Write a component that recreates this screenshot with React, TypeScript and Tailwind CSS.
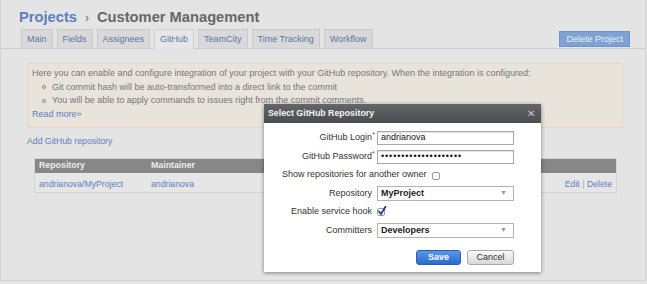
import React from "react";

const tabs = ["Main", "Fields", "Assignees", "GitHub", "TeamCity", "Time Tracking", "Workflow"];

function Check({ checked }: { checked?: boolean }) {
  return (
    <svg width="10" height="10" viewBox="0 0 10 10" className="shrink-0">
      <rect x="0.5" y="2.5" width="7" height="7" rx="1.5" fill="#fff" stroke="#9a9a9a" />
      {checked && <path d="M2 5.5 L4 8 L8.5 0.8" fill="none" stroke="#1f3f8a" strokeWidth="1.8" strokeLinecap="round" />}
    </svg>
  );
}

function Label({ text, req }: { text: string; req?: boolean }) {
  return (
    <div className="w-[108px] shrink-0 text-right text-[9px] text-[#333]">
      <span className="relative">
        {text}
        {req && <span className="absolute -right-[3px] -top-[2px] text-[7px] text-[#d22]">*</span>}
      </span>
    </div>
  );
}

function Select({ value }: { value: string }) {
  return (
    <div className="ml-[5px] flex h-[15px] w-[137px] items-center justify-between border border-[#b3b3b3] bg-white pl-[3px] pr-[6px]">
      <span className="text-[9px] font-bold text-[#222]">{value}</span>
      <span className="text-[7px] text-[#999]">▼</span>
    </div>
  );
}

export default function App() {
  return (
    <div className="relative h-[284px] w-[647px] overflow-hidden bg-[#e4e4e4] font-['Liberation_Sans',Arial,sans-serif]">
      {/* page behind the dialog */}
      <div className="h-[281px] w-[646px] border-r border-b border-l border-[#d2d2d2]">
        <h1 className="pl-[18px] pt-[8px] text-[14.7px] font-bold leading-[18px]">
          <span className="text-[#5b80c0]">Projects</span>
          <span className="mx-[8px] text-[12px] text-[#8a8a8a]">›</span>
          <span className="text-[#676767]">Customer Management</span>
        </h1>

        <div className="mt-[2px] flex items-end justify-between border-b border-[#cdcdcd] pl-[20px] pr-[15px]">
          <div className="flex gap-[4px]">
            {tabs.map((t) => (
              <div
                key={t}
                className={
                  t === "GitHub"
                    ? "-mb-px h-[20px] border border-b-0 border-[#cfcfcf] bg-[#e6e6e6] px-[5px] text-[9px] leading-[19px] text-[#5a76a8]"
                    : "h-[19px] border border-b-0 border-[#cacaca] bg-[#d9d9d9] px-[5px] text-[9px] leading-[19px] text-[#5a76a8]"
                }
              >
                {t}
              </div>
            ))}
          </div>
          <div className="mb-[1px] h-[16px] border border-[#6f94c6] bg-[#7ea2d3] px-[6px] text-[9px] leading-[14px] text-[#e9eff8]">
            Delete Project
          </div>
        </div>

        <div className="ml-[26px] mt-[14px] w-[596px]">
          <div className="border border-[#e2d8bc] bg-[#e8e4db] px-[4px] pb-[6px] pt-[3px] text-[9px] leading-[13.5px] text-[#767676]">
            <p>Here you can enable and configure integration of your project with your GitHub repository. When the integration is configured:</p>
            <div className="flex items-center pl-[10px]">
              <span className="mr-[6px] h-[4px] w-[4px] rounded-full border border-[#8a8a8a]" />
              Git commit hash will be auto-transformed into a direct link to the commit
            </div>
            <div className="flex items-center pl-[10px]">
              <span className="mr-[6px] h-[4px] w-[4px] rounded-full border border-[#8a8a8a]" />
              You will be able to apply commands to issues right from the commit comments.
            </div>
            <a className="text-[#5b80c0]">Read more»</a>
          </div>

          <div className="mt-[7px] text-[8.7px] leading-[13px] text-[#5b80c0]">Add GitHub repository</div>

          <div className="ml-[7px] mt-[10px] w-[583px] border border-[#d3d3d3]">
            <div className="flex h-[14px] items-center bg-[#878787] text-[8.8px] font-bold text-[#ededed]">
              <span className="w-[116px] pl-[4px]">Repository</span>
              <span>Maintainer</span>
            </div>
            <div className="flex h-[19px] items-center bg-[#e6e6e6] pt-[4px] text-[8.7px] text-[#5b80c0]">
              <span className="w-[116px] pl-[4px]">andrianova/MyProject</span>
              <span>andrianova</span>
              <span className="ml-auto pr-[4px]">
                Edit <span className="text-[#aaa]">|</span> Delete
              </span>
            </div>
          </div>
        </div>
      </div>

      {/* dialog */}
      <div className="absolute left-[264px] top-[104px] flex w-[277px] flex-col bg-white shadow-[0_1px_4px_rgba(0,0,0,0.45)]">
        <div className="flex h-[19px] items-center justify-between bg-gradient-to-b from-[#64666a] to-[#4a4c50] pl-[4px] pr-[6px]">
          <span className="text-[8.8px] font-bold text-[#f2f2f2]">Select GitHub Repository</span>
          <span className="text-[10px] text-[#c9c9c9]">✕</span>
        </div>

        <div className="flex flex-col pb-[7px]">
          <div className="mt-[8px] flex h-[14px] items-center">
            <Label text="GitHub Login" req />
            <div className="ml-[5px] flex h-[14px] w-[137px] items-center border border-[#a8a8a8] bg-white pl-[3px] text-[9px] text-[#111] shadow-[inset_0_1px_1px_rgba(0,0,0,0.12)]">
              andrianova
            </div>
          </div>
          <div className="mt-[5px] flex h-[14px] items-center">
            <Label text="GitHub Password" req />
            <div className="ml-[5px] flex h-[14px] w-[137px] items-center border border-[#a8a8a8] bg-white pl-[3px] text-[9px] tracking-[0.9px] text-[#111] shadow-[inset_0_1px_1px_rgba(0,0,0,0.12)]">
              ••••••••••••••••••••
            </div>
          </div>
          <div className="mt-[4px] flex h-[14px] items-center gap-[5px] pl-[18px] text-[9px] text-[#333]">
            Show repositories for another owner
            <Check />
          </div>
          <div className="mt-[4px] flex h-[15px] items-center">
            <Label text="Repository" />
            <Select value="MyProject" />
          </div>
          <div className="mt-[4px] flex h-[14px] items-center">
            <Label text="Enable service hook" />
            <div className="ml-[5px] -mt-[2px]">
              <Check checked />
            </div>
          </div>
          <div className="mt-[4px] flex h-[15px] items-center">
            <Label text="Committers" />
            <Select value="Developers" />
          </div>
          <div className="mt-[12px] flex justify-end gap-[6px] pr-[27px]">
            <button className="h-[15px] w-[45px] rounded-[3px] border border-[#2b5fae] bg-gradient-to-b from-[#5a98e6] to-[#2a6acd] text-[9px] font-bold leading-[13px] text-white">
              Save
            </button>
            <button className="h-[15px] w-[47px] rounded-[3px] border border-[#a9a9a9] bg-gradient-to-b from-[#fafafa] to-[#d8d8d8] text-[9px] leading-[13px] text-[#333]">
              Cancel
            </button>
          </div>
        </div>
      </div>
    </div>
  );
}
